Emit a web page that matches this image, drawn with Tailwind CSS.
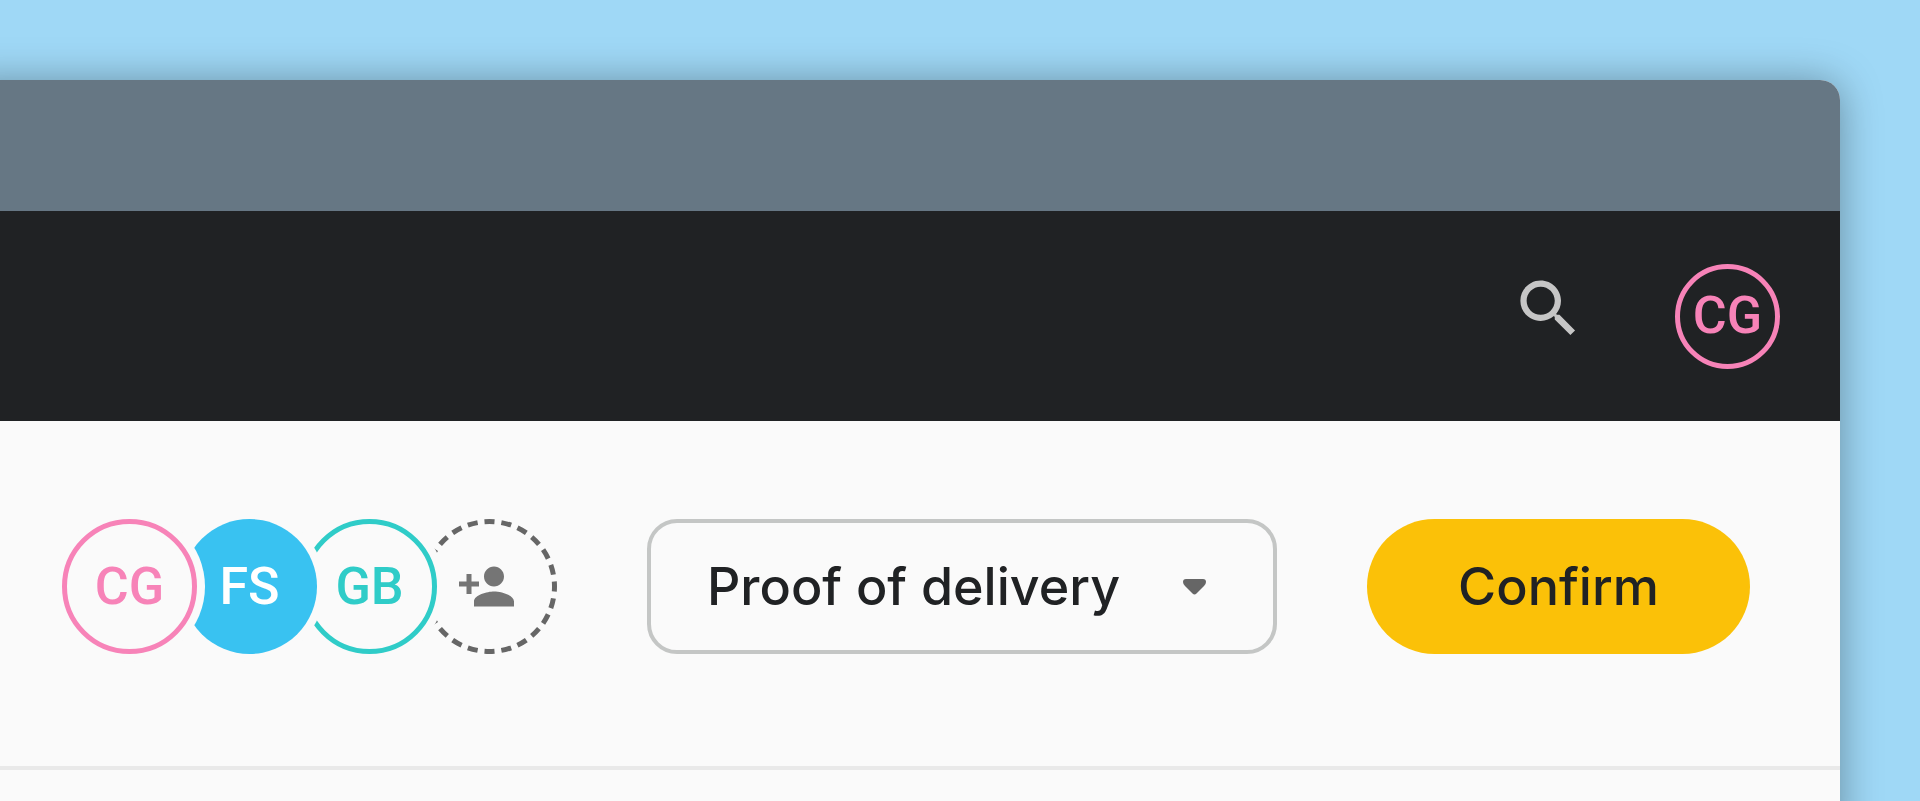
<!DOCTYPE html>
<html lang="en">
<head>
    <meta charset="UTF-8">
    <meta name="viewport" content="width=device-width, initial-scale=1.0">
    <title>Proof of delivery</title>
    <script src="https://cdn.jsdelivr.net/npm/@tailwindcss/browser@4"></script>
</head>
<body class="font-['Inter','Noto_Sans',sans-serif] font-medium text-[52px] leading-[60px] text-[#202224]">
    <div class="flex flex-col h-screen pt-20 pr-20 overflow-hidden bg-[#9fd8f6]">
        <div class="flex flex-col flex-1 -ml-10 -mb-10 rounded-tr-[20px] bg-[#fafafa] shadow-[0_2px_40px_rgba(0,0,0,0.36)]">
            <div class="h-[131px] rounded-tr-[20px] bg-[#667784]"></div>

            <header class="flex items-center justify-end gap-[89px] h-[210px] pr-[60px] bg-[#202224]">
                <button type="button" aria-label="Search" class="flex items-start h-[90px] text-[#c6c6c6]">
                    <svg class="size-[75px]" viewBox="0 0 24 24" fill="currentColor">
                        <path d="M15.5 14h-.79l-.28-.27C15.41 12.59 16 11.11 16 9.5 16 5.91 13.09 3 9.5 3S3 5.91 3 9.5 5.91 16 9.5 16c1.61 0 3.09-.59 4.23-1.57l.27.28v.79l5 4.99L20.49 19l-4.99-5zm-6 0C7.01 14 5 11.99 5 9.5S7.01 5 9.5 5 14 7.01 14 9.5 11.99 14 9.5 14z"/>
                    </svg>
                </button>
                <button type="button" class="flex items-center justify-center size-[105px] rounded-full border-[5px] border-[#f783b8] font-[Roboto,sans-serif] text-[#f783b8]">CG</button>
            </header>

            <main class="flex items-center justify-end gap-[90px] pt-[98px] pb-28 pr-[90px] border-b-4 border-[#e9e9e9]">
                <div class="flex font-[Roboto,sans-serif]">
                    <div class="relative z-30 flex items-center justify-center size-[135px] rounded-full border-[5px] border-[#f783b8] bg-[#fafafa] text-[#f783b8] ring-8 ring-[#fafafa]">CG</div>
                    <div class="relative z-20 flex items-center justify-center size-[135px] -ml-[15px] rounded-full bg-[#39c2f1] text-white ring-8 ring-[#fafafa]">FS</div>
                    <div class="relative z-10 flex items-center justify-center size-[135px] -ml-[15px] rounded-full border-[5px] border-[#2fccc8] bg-[#fafafa] text-[#2fccc8] ring-8 ring-[#fafafa]">GB</div>
                    <button type="button" aria-label="Add person" class="size-[135px] -ml-[15px] rounded-full">
                        <svg class="size-[135px]" viewBox="0 0 135 135">
                            <circle cx="67.5" cy="67.5" r="65" fill="none" stroke="#666" stroke-width="5" pathLength="240" stroke-dasharray="6 4" stroke-dashoffset="3"/>
                            <g fill="#757575" transform="translate(34.5 37.5) scale(2.5)">
                                <path d="M15 12c2.21 0 4-1.79 4-4s-1.79-4-4-4-4 1.79-4 4 1.79 4 4 4zm-9-2V7H4v3H1v2h3v3h2v-3h3v-2H6zm9 4c-2.67 0-8 1.34-8 4v2h16v-2c0-2.66-5.33-4-8-4z"/>
                            </g>
                        </svg>
                    </button>
                </div>

                <div class="grid items-center w-[630px]">
                    <select aria-label="Document" class="col-start-1 row-start-1 appearance-none w-full h-[135px] pl-14 pr-28 rounded-[30px] border-4 border-[#c4c6c5] bg-transparent">
                        <option>Proof of delivery</option>
                    </select>
                    <svg class="col-start-1 row-start-1 justify-self-end w-[23px] h-4 mr-[71px] pointer-events-none" viewBox="0 0 23 16" fill="#666">
                        <path d="M3 0h17q3 0 3 3 0 2-2 4l-7.500 7.500q-2 2-4 0L2 7Q0 5 0 3 0 0 3 0z"/>
                    </svg>
                </div>

                <button type="button" class="w-[383px] h-[135px] rounded-full bg-[#fbc108]">Confirm</button>
            </main>
        </div>
    </div>
</body>
</html>
